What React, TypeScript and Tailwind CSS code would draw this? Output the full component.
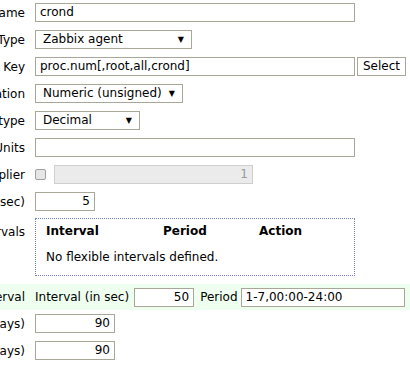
import React from 'react';

const font = { fontFamily: '"DejaVu Sans", Verdana, sans-serif' };

const Row: React.FC<{ label: string; green?: boolean; children: React.ReactNode; h: string }> = ({
  label,
  green,
  children,
  h
}) => (
  <div className={`flex items-center ${h} ${green ? 'bg-[#efffef]' : ''}`}>
    <div className="w-[25px] shrink-0 flex justify-end whitespace-nowrap">{label}</div>
    <div className="pl-[10px] flex items-center">{children}</div>
  </div>
);

const Input: React.FC<{ w: string; value?: string; right?: boolean }> = ({ w, value = '', right }) => (
  <div
    className={`${w} h-[19px] border border-[#a9a898] bg-white px-[4px] leading-[17px] whitespace-nowrap overflow-hidden ${
      right ? 'text-right' : ''
    }`}
  >
    {value}
  </div>
);

const Select: React.FC<{ w: string; value: string }> = ({ w, value }) => (
  <div className={`${w} h-[19px] border border-[#a9a898] bg-white pl-[7px] pr-[7px] flex items-center justify-between`}>
    <span className="leading-[17px]">{value}</span>
    <span className="text-[8px] leading-none">▼</span>
  </div>
);

export default function App() {
  return (
    <div className="w-[410px] h-[366px] overflow-hidden bg-white text-[12px] text-black" style={font}>
      <div className="-mt-[1px]">
        <Row label="Name" h="h-[27px]">
          <Input w="w-[320px]" value="crond" />
        </Row>
        <Row label="Type" h="h-[27px]">
          <Select w="w-[157px]" value="Zabbix agent" />
        </Row>
        <Row label="Key" h="h-[27px]">
          <Input w="w-[320px]" value="proc.num[,root,all,crond]" />
          <button className="ml-[2px] w-[49px] h-[19px] border border-[#a9a898] bg-white leading-[17px]">
            Select
          </button>
        </Row>
        <Row label="Type of information" h="h-[27px]">
          <Select w="w-[148px]" value="Numeric (unsigned)" />
        </Row>
        <Row label="Data type" h="h-[27px]">
          <Select w="w-[105px]" value="Decimal" />
        </Row>
        <Row label="Units" h="h-[27px]">
          <Input w="w-[320px]" />
        </Row>
        <Row label="Use custom multiplier" h="h-[27px]">
          <div className="w-[11px] h-[11px] rounded-[2px] border border-[#a0a0a0] bg-[#e6e6e6]" />
          <div className="ml-[8px] w-[199px] h-[19px] border border-[#cfcfcf] bg-[#ebebeb] px-[4px] text-right leading-[17px] text-[#9a9a9a]">
            1
          </div>
        </Row>
        <Row label="Update interval (in sec)" h="h-[27px]">
          <Input w="w-[60px]" value="5" right />
        </Row>
        <div className="flex items-start h-[69px] pt-[3px]">
          <div className="w-[25px] shrink-0 flex justify-end whitespace-nowrap pt-[5px]">Flexible intervals</div>
          <div className="ml-[10px] w-[320px] h-[58px] border border-dotted border-[#7080b8] px-[10px] pt-[3px]">
            <div className="flex font-bold">
              <span className="w-[117px]">Interval</span>
              <span className="w-[96px]">Period</span>
              <span>Action</span>
            </div>
            <div className="mt-[8px]">No flexible intervals defined.</div>
          </div>
        </div>
        <Row label="New flexible interval" green h="h-[26px]">
          <span className="whitespace-nowrap">Interval (in sec)</span>
          <div className="ml-[5px]">
            <Input w="w-[60px]" value="50" right />
          </div>
          <span className="ml-[6px]">Period</span>
          <div className="ml-[3px]">
            <Input w="w-[164px]" value="1-7,00:00-24:00" />
          </div>
        </Row>
        <Row label="History storage period (in days)" h="h-[27px]">
          <Input w="w-[80px]" value="90" right />
        </Row>
        <Row label="Trend storage period (in days)" h="h-[27px]">
          <Input w="w-[80px]" value="90" right />
        </Row>
      </div>
    </div>
  );
}
